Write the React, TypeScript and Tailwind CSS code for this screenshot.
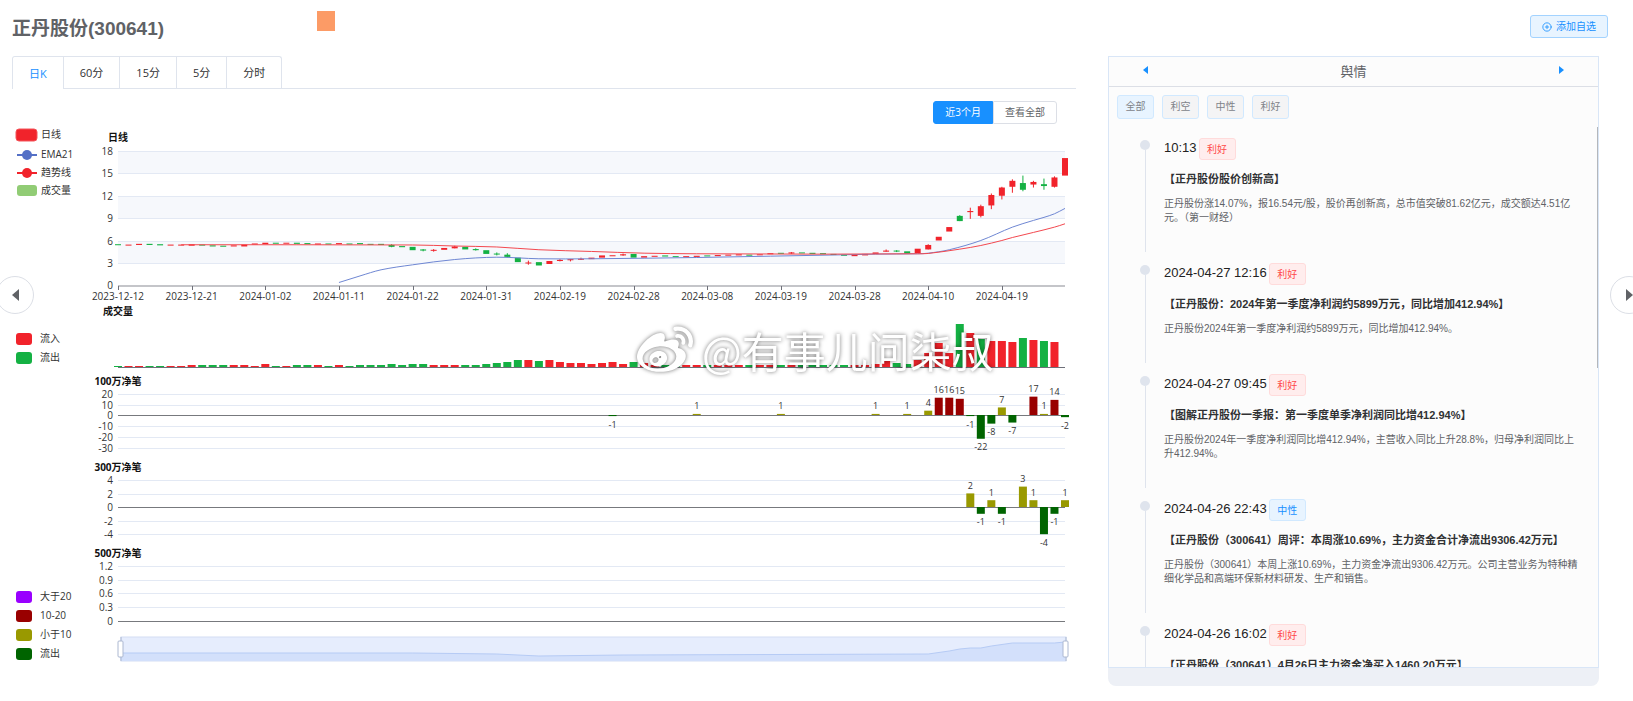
import { useState } from "react"
import { FaWeibo } from "react-icons/fa"
import { CirclePlus } from "lucide-react"

const RED = "#f1232b"
const GREEN = "#14b143"

// ================= DATA =================
const tabs = ["日K", "60分", "15分", "5分", "分时"]
const ranges = ["近3个月", "查看全部"]
const filters = ["全部", "利空", "中性", "利好"]

const dates = [
  "2023-12-12", "2023-12-21", "2024-01-02", "2024-01-11", "2024-01-22",
  "2024-01-31", "2024-02-19", "2024-02-28", "2024-03-08", "2024-03-19",
  "2024-03-28", "2024-04-10", "2024-04-19",
]

// open, close, low, high
const candles: number[][] = [
  [5.6, 5.5], [5.45, 5.55], [5.5, 5.65], [5.65, 5.5], [5.6, 5.45], [5.45, 5.55], [5.45, 5.55],
  [5.4, 5.6], [5.55, 5.45], [5.45, 5.3], [5.4, 5.3], [5.3, 5.45], [5.3, 5.55], [5.55, 5.7],
  [5.6, 5.8], [5.8, 5.7], [5.7, 5.8], [5.8, 5.65], [5.75, 5.6], [5.55, 5.7], [5.7, 5.6],
  [5.6, 5.75], [5.7, 5.6], [5.75, 5.6], [5.65, 5.55], [5.65, 5.5], [5.5, 5.25, 5.2, 5.6], [5.35, 5.2],
  [5.25, 4.8], [4.9, 4.75, 4.65, 4.95], [4.75, 4.85, 4.6, 4.95], [4.85, 5.1], [5.05, 5.3, 5.05, 5.4],
  [5.25, 4.9], [4.95, 4.8, 4.75, 5.05], [4.8, 4.3], [4.35, 4.25, 4.1, 4.5], [4.2, 3.9, 3.8, 4.4],
  [3.8, 3.2], [3.05, 3.15, 2.85, 3.4], [3.2, 2.75], [2.95, 3.35], [3.35, 3.5, 3.3, 3.6],
  [3.45, 3.6, 3.3, 3.6], [3.55, 3.65, 3.5, 3.8], [3.6, 3.8], [3.8, 4.1], [4.0, 4.12], [4.1, 4.25, 4.05, 4.35],
  [4.3, 3.8], [3.8, 4.0], [3.95, 4.05], [4.1, 3.95], [4.0, 3.9], [3.85, 4.0], [3.9, 4.05],
  [4.1, 4.0], [4.0, 4.15], [4.1, 4.2], [4.1, 4.25], [4.2, 4.1], [4.15, 4.25], [4.25, 4.4],
  [4.45, 4.35], [4.35, 4.5, 4.3, 4.55], [4.5, 4.4], [4.45, 4.3], [4.4, 4.3], [4.3, 4.15], [4.2, 4.05],
  [4.0, 4.2], [4.1, 4.3], [4.3, 4.5], [4.6, 4.75, 4.6, 4.9], [4.75, 4.65, 4.55, 4.8], [4.65, 4.35],
  [4.4, 5.0], [4.9, 5.5, 4.9, 5.6], [6.1, 6.6], [7.3, 7.9], [9.4, 8.7, 8.7, 9.5], [9.9, 10.05, 9.0, 10.5],
  [9.4, 10.7, 9.2, 10.9], [10.8, 12.2, 10.3, 12.4], [12.1, 13.2, 11.6, 13.3], [13.3, 14.1, 12.5, 14.3],
  [13.8, 12.9, 12.7, 14.8], [13.6, 13.95, 13.2, 14.1], [13.65, 13.4, 12.9, 14.4], [13.3, 14.55, 13.2, 14.7],
  [14.8, 17.15],
]

// index, price
const ema21 = [
  [21, 0.47], [23, 1.35], [25, 2.17], [28, 2.84], [32, 3.55], [36, 3.86], [40, 3.65], [45, 3.65],
  [55, 3.82], [62, 4], [67, 4.13], [72, 4.27], [76, 4.32], [77, 4.4], [79, 4.86], [82, 6.1],
  [85, 7.89], [87, 8.79], [88, 9.2], [89, 9.68], [90, 10.4],
]
const trend = [
  [6, 5.53], [28, 5.5], [32, 5.36], [36, 5.23], [40, 4.86], [45, 4.63], [50, 4.4], [55, 4.32],
  [67, 4.27], [76, 4.32], [77, 4.36], [80, 4.94], [82, 5.43], [84, 6.1], [85, 6.5], [87, 7.18],
  [89, 7.89], [90, 8.34],
]

// + inflow, - outflow
const volumes = [
  -1, 1, 1, -1, -1, 1, 1, 2, -2, -2, -2, 2, 2, 1, 3, -1, 1, -2, -2, 2, -1, 2, -1, -2, -2, -2, -3, -2, -3, -3,
  2, 2, 2, -2, -2, -3, -4, -5, -7, 7, -6, 7, 5, 4, 4, 3, 4, 5, 3, -5, 4, 2, -2, -2, 2, 2, -2, 2, 2, 2, -2, 2, 2,
  -2, 2, -2, -2, -2, -2, -2, 2, 2, 3, 6, -4, -3, 7, 14, 24, 14, -43, 34, -28, 26, 26, 25, -29, 27, -26, 25,
]

const net100 = [
  [47, -1], [55, 1], [63, 1], [72, 1], [75, 1], [77, 4], [78, 16], [79, 16], [80, 15], [81, -1], [82, -22],
  [83, -8], [84, 7], [85, -7], [87, 17], [88, 1], [89, 14], [90, -2],
]
const net300 = [[81, 2], [82, -1], [83, 1], [84, -1], [86, 3], [87, 1], [88, -4], [89, -1], [90, 1]]

const overview = [
  [0, 8], [28, 8], [36, 7], [40, 5], [48, 6], [77, 7], [79, 10], [80, 12], [81, 13], [82, 13],
  [83, 15], [85, 18], [86, 18], [89, 18], [90, 19],
]

const news = [
  {
    time: "10:13",
    type: "利好",
    title: "【正丹股份股价创新高】",
    text: "正丹股份涨14.07%，报16.54元/股，股价再创新高，总市值突破81.62亿元，成交额达4.51亿元。（第一财经）",
  },
  {
    time: "2024-04-27 12:16",
    type: "利好",
    title: "【正丹股份：2024年第一季度净利润约5899万元，同比增加412.94%】",
    text: "正丹股份2024年第一季度净利润约5899万元，同比增加412.94%。",
  },
  {
    time: "2024-04-27 09:45",
    type: "利好",
    title: "【图解正丹股份一季报：第一季度单季净利润同比增412.94%】",
    text: "正丹股份2024年一季度净利润同比增412.94%，主营收入同比上升28.8%，归母净利润同比上升412.94%。",
  },
  {
    time: "2024-04-26 22:43",
    type: "中性",
    title: "【正丹股份（300641）周评：本周涨10.69%，主力资金合计净流出9306.42万元】",
    text: "正丹股份（300641）本周上涨10.69%，主力资金净流出9306.42万元。公司主营业务为特种精细化学品和高端环保新材料研发、生产和销售。",
  },
  {
    time: "2024-04-26 16:02",
    type: "利好",
    title: "【正丹股份（300641）4月26日主力资金净买入1460.20万元】",
    text: "",
  },
]

// ================= CHART =================
const LEFT = 106
const RIGHT = 1053
const STEP = (RIGHT - LEFT) / 90

const xAt = (i: number) => LEFT + i * STEP
const priceY = (p: number) => 162 - p * 7.46

const toPoints = (list: number[][], y: (v: number) => number) =>
  list.map(([i, v]) => `${xAt(i)},${y(v)}`).join(" ")

// curve through all points, tangents taken from the neighbours
const toCurve = (list: number[][]) => {
  const pts = list.map(([i, v]) => [xAt(i), priceY(v)])
  const slope = (k: number) => {
    const a = pts[Math.max(k - 1, 0)]
    const b = pts[Math.min(k + 1, pts.length - 1)]
    return (b[1] - a[1]) / (b[0] - a[0])
  }
  return pts
    .map(([x, y], k) => {
      if (k === 0) return `M${x} ${y}`
      const [px, py] = pts[k - 1]
      const d = (x - px) / 3
      return `C${px + d} ${py + d * slope(k - 1)} ${x - d} ${y - d * slope(k)} ${x} ${y}`
    })
    .join("")
}

function Grid({ ticks, top, gap, zero }: { ticks: string[]; top: number; gap: number; zero: number }) {
  return (
    <g>
      {ticks.map((t, i) => {
        const y = Math.round(top + i * gap)
        return (
          <g key={t}>
            <rect x={LEFT} y={y} width={RIGHT - LEFT} height={1} fill={i === zero ? "#77797d" : "#e3e9f4"} />
            <text x={101} y={y} textAnchor="end" dominantBaseline="central">
              {t}
            </text>
          </g>
        )
      })}
    </g>
  )
}

function NetBars({ data, zero, unit }: { data: number[][]; zero: number; unit: number }) {
  return (
    <g>
      {data.map(([i, v]) => {
        const h = Math.abs(v) * unit
        const fill = v < 0 ? "#006400" : v >= 10 ? "#990000" : "#999900"
        return (
          <g key={i}>
            <rect x={xAt(i) - 4} y={v < 0 ? zero : zero - h} width={8} height={h} fill={fill} />
            <text
              x={xAt(i)}
              y={v < 0 ? zero + h + 8 : zero - h - 8}
              textAnchor="middle"
              dominantBaseline="central"
              fontSize={9}
            >
              {v}
            </text>
          </g>
        )
      })}
    </g>
  )
}

function Swatch({ y, color, label }: { y: number; color: string; label: string }) {
  return (
    <g>
      <rect x={4} y={y - 6} width={16} height={12} rx={3} fill={color} />
      <text x={28} y={y - 1} dominantBaseline="central">{label}</text>
    </g>
  )
}

function SubTitle({ y, children }: { y: number; children: string }) {
  return (
    <text x={106} y={y} textAnchor="middle" dominantBaseline="central" fontWeight="bold" fill="#111">
      {children}
    </text>
  )
}

function StockChart() {
  return (
    <svg
      viewBox="0 0 1064 540"
      className="block w-full overflow-visible"
      fontFamily='"Open Sans", "Noto Sans CJK SC", sans-serif'
      fontSize={10}
      fill="#333"
      role="img"
      aria-label="正丹股份日线图"
    >
      {/* ===== PRICE ===== */}
      <SubTitle y={13}>日线</SubTitle>
      {[18, 12, 6].map((p) => (
        <rect key={p} x={LEFT} y={priceY(p)} width={RIGHT - LEFT} height={22} fill="#f6f8fc" />
      ))}
      <Grid ticks={["18", "15", "12", "9", "6", "3", "0"]} top={27} gap={22.4} zero={-1} />
      <rect x={LEFT} y={161} width={RIGHT - LEFT} height={2} fill="#c4c5c9" />
      {dates.map((d, i) => (
        <g key={d}>
          <rect x={Math.round(xAt(i * 7))} y={162} width={1} height={4} fill="#6e7079" />
          <text x={xAt(i * 7)} y={172} textAnchor="middle" dominantBaseline="central">{d}</text>
        </g>
      ))}
      {candles.map(([open, close, low, high], i) => {
        const color = close >= open ? RED : GREEN
        const top = priceY(Math.max(open, close))
        const h = Math.max(Math.abs(close - open) * 7.46, 1)
        return (
          <g key={i} fill={color}>
            {high && <rect x={xAt(i) - 0.5} y={priceY(high)} width={1} height={(high - low) * 7.46} />}
            <rect x={xAt(i) - 3} y={top} width={6} height={h} />
          </g>
        )
      })}
      <path d={toCurve(ema21)} fill="none" stroke="#6f87d3" />
      <path d={toCurve(trend)} fill="none" stroke="#f3484f" />

      {/* ===== LEGEND ===== */}
      <rect x={4} y={5} width={21} height={12} rx={3} fill={RED} stroke="#f4545a" />
      <text x={29} y={10} dominantBaseline="central">日线</text>
      <path d="M5 31H25" stroke="#5470c6" strokeWidth={2} />
      <circle cx={15} cy={31} r={5} fill="#5470c6" />
      <text x={29} y={30} dominantBaseline="central">EMA21</text>
      <path d="M5 49H25" stroke={RED} strokeWidth={2} />
      <circle cx={15} cy={49} r={5} fill={RED} />
      <text x={29} y={48} dominantBaseline="central">趋势线</text>
      <rect x={5} y={61} width={20} height={11} rx={3} fill="#91cc75" />
      <text x={29} y={66} dominantBaseline="central">成交量</text>

      {/* ===== VOLUME ===== */}
      <SubTitle y={187}>成交量</SubTitle>
      <Swatch y={215} color={RED} label="流入" />
      <Swatch y={234} color={GREEN} label="流出" />
      {volumes.map((v, i) => (
        <rect
          key={i}
          x={xAt(i) - 4}
          y={243 - Math.abs(v)}
          width={8}
          height={Math.abs(v)}
          fill={v < 0 ? GREEN : RED}
        />
      ))}
      <rect x={LEFT} y={243} width={RIGHT - LEFT} height={1} fill="#6e7079" />

      {/* ===== NET ORDERS ===== */}
      <SubTitle y={257}>100万净笔</SubTitle>
      <Grid ticks={["20", "10", "0", "-10", "-20", "-30"]} top={270} gap={10.7} zero={2} />
      <NetBars data={net100} zero={291} unit={1.08} />

      <SubTitle y={343}>300万净笔</SubTitle>
      <Grid ticks={["4", "2", "0", "-2", "-4"]} top={356} gap={13.6} zero={2} />
      <NetBars data={net300} zero={383} unit={6.8} />

      <SubTitle y={429}>500万净笔</SubTitle>
      <Grid ticks={["1.2", "0.9", "0.6", "0.3", "0"]} top={442} gap={13.7} zero={4} />

      <Swatch y={473} color="#9900ff" label="大于20" />
      <Swatch y={492} color="#990000" label="10-20" />
      <Swatch y={511} color="#999900" label="小于10" />
      <Swatch y={530} color="#006400" label="流出" />

      {/* ===== DATA ZOOM ===== */}
      <rect x={109} y={513} width={945} height={24} fill="#e6edfd" stroke="#d3def3" />
      <polygon points={`109,537 ${toPoints(overview, (v) => 537 - v)} 1053,537`} fill="#d3e0fb" />
      <polyline points={toPoints(overview, (v) => 537 - v)} fill="none" stroke="#b6cbf5" />
      {[109, 1054].map((x) => (
        <g key={x} stroke="#acb8d1">
          <path d={`M${x} 513V537`} />
          <rect x={x - 3} y={517} width={5} height={16} rx={1} fill="#fff" />
        </g>
      ))}

      {/* ===== WATERMARK ===== */}
      <g fill="#fff" className="drop-shadow-[0_0_2px_rgba(0,0,0,0.55)]">
        <FaWeibo x={625} y={199} size={56} color="#fff" />
        <text x={690} y={244} fontSize={42} fontFamily='"Noto Sans CJK SC", sans-serif'>
          @有事儿问柒叔
        </text>
      </g>
    </svg>
  )
}

// ================= NEWS =================
function NewsItem({ item }: { item: (typeof news)[number] }) {
  return (
    <li className="flex gap-3.5">
      <div className="flex w-2.5 shrink-0 flex-col items-center pt-0.5 pb-[11px]">
        <span className="h-2.5 w-2.5 rounded-full bg-[#dfe4ed]" />
        <span className="w-px flex-1 bg-[#dfe4ed]" />
      </div>
      <div className="min-w-0 flex-1 pb-[38px]">
        <div className="flex h-[22px] items-center gap-0.5">
          <time className="pb-0.5 text-[13px] text-[#222]">{item.time}</time>
          <span
            className={`flex h-[22px] w-[37px] items-center justify-center rounded-[3px] border text-[10px] ${
              item.type === "利好"
                ? "border-[#ffdbdb] bg-[#ffeded] text-[#ff4949]"
                : "border-[#d1e9ff] bg-[#e8f4ff] text-[#1890ff]"
            }`}
          >
            {item.type}
          </span>
        </div>
        <h3 className="mt-[11px] text-[11px] leading-4 font-bold whitespace-nowrap text-[#303133]">{item.title}</h3>
        <p className="mt-2.5 text-[10px] leading-[14px] text-[#606266]">{item.text}</p>
      </div>
    </li>
  )
}

function NewsPanel() {
  const [filter, setFilter] = useState("全部")

  return (
    <aside className="self-start overflow-hidden rounded-b-lg bg-[#edf0f6] pb-[18px]">
      <div className="relative border border-[#d9e6f7] bg-[#fcfcfc]">
        <div className="flex h-[30px] items-center justify-between border-b border-[#dcdfe6] px-[34px]">
          <button aria-label="上一个" className="mb-1 text-[#1890ff]">
            <svg width="6" height="8" viewBox="0 0 6 8" fill="currentColor"><path d="M5 0V8L0 4Z" /></svg>
          </button>
          <h2 className="text-[13px] text-[#606266]">舆情</h2>
          <button aria-label="下一个" className="mb-1 text-[#1890ff]">
            <svg width="6" height="8" viewBox="0 0 6 8" fill="currentColor"><path d="M1 0V8L6 4Z" /></svg>
          </button>
        </div>

        <div className="flex gap-2 px-2 py-2">
          {filters.map((f) => (
            <button
              key={f}
              onClick={() => setFilter(f)}
              className={`h-6 w-[37px] rounded-[3px] border border-[#d1e9ff] pb-0.5 text-[10px] text-[#808389] ${
                filter === f ? "bg-[#e8f4ff]" : "bg-[#f4f4f5]"
              }`}
            >
              {f}
            </button>
          ))}
        </div>

        <div className="relative max-h-[540px] overflow-hidden">
          <ul className="pt-[11px] pr-4 pl-[31px]">
            {news.map((n) => (
              <NewsItem key={n.time} item={n} />
            ))}
          </ul>
          <span className="absolute top-0 right-0 h-[241px] w-px bg-[#b4b7bb]" />
        </div>
      </div>
    </aside>
  )
}

// ================= PAGE =================
export default function App() {
  const [tab, setTab] = useState("日K")
  const [range, setRange] = useState("近3个月")

  return (
    <div className="relative min-h-screen overflow-hidden bg-white pl-3 font-['Liberation_Sans','Noto_Sans_CJK_SC',sans-serif]">
      <header className="flex h-14 items-start pr-[25px]">
        <h1 className="mt-[15px] text-[19px] leading-7 font-bold text-[#606266]">正丹股份(300641)</h1>
        <span className="mt-[11px] ml-[153px] h-5 w-[18px] bg-[#fc9b66]" />
        <button className="mt-[15px] ml-auto flex h-[23px] items-center gap-1 rounded-[3px] border border-[#a3d3ff] bg-[#e8f4ff] px-[11px] text-[10px] text-[#1890ff]">
          <CirclePlus size={10} strokeWidth={2} />
          添加自选
        </button>
      </header>

      <div className="grid grid-cols-[1064fr_491fr] gap-8 pr-[34px]">
        <main className="min-w-0 font-['Open_Sans','Noto_Sans_CJK_SC',sans-serif]">
          <div className="flex h-[33px] border-b border-[#dfe4ed]">
            <div role="tablist" className="flex h-[33px] rounded-t-[3px] border border-b-0 border-[#dfe4ed]">
              {tabs.map((t) => (
                <button
                  key={t}
                  role="tab"
                  aria-selected={tab === t}
                  onClick={() => setTab(t)}
                  className={`border-r border-[#dfe4ed] px-4 pt-0.5 text-[11px] last:border-r-0 ${
                    tab === t ? "rounded-tl-[3px] bg-white text-[#1890ff]" : "border-b text-[#303133]"
                  }`}
                >
                  {t}
                </button>
              ))}
            </div>
          </div>

          <div className="mt-3 flex h-[23px] justify-end pr-[19px]">
            {ranges.map((r) => (
              <button
                key={r}
                onClick={() => setRange(r)}
                className={`border px-[11px] text-[10px] first:rounded-l-[3px] last:rounded-r-[3px] ${
                  range === r ? "border-[#1890ff] bg-[#1890ff] text-white" : "border-[#dcdfe6] bg-white text-[#606266]"
                }`}
              >
                {r}
              </button>
            ))}
          </div>

          <StockChart />
        </main>

        <NewsPanel />
      </div>

      {/* prev / next stock */}
      <button
        aria-label="上一只"
        className="absolute top-[276px] -left-1 flex h-[38px] w-[38px] items-center justify-center rounded-full border border-[#dcdfe6] bg-white text-[#606266]"
      >
        <svg width="7" height="12" viewBox="0 0 7 12" fill="currentColor"><path d="M7 0V12L0 6Z" /></svg>
      </button>
      <button
        aria-label="下一只"
        className="absolute top-[276px] -right-[15px] flex h-[38px] w-[38px] items-center justify-center rounded-full border border-[#dcdfe6] bg-white text-[#606266]"
      >
        <svg width="7" height="12" viewBox="0 0 7 12" fill="currentColor"><path d="M0 0V12L7 6Z" /></svg>
      </button>
    </div>
  )
}
